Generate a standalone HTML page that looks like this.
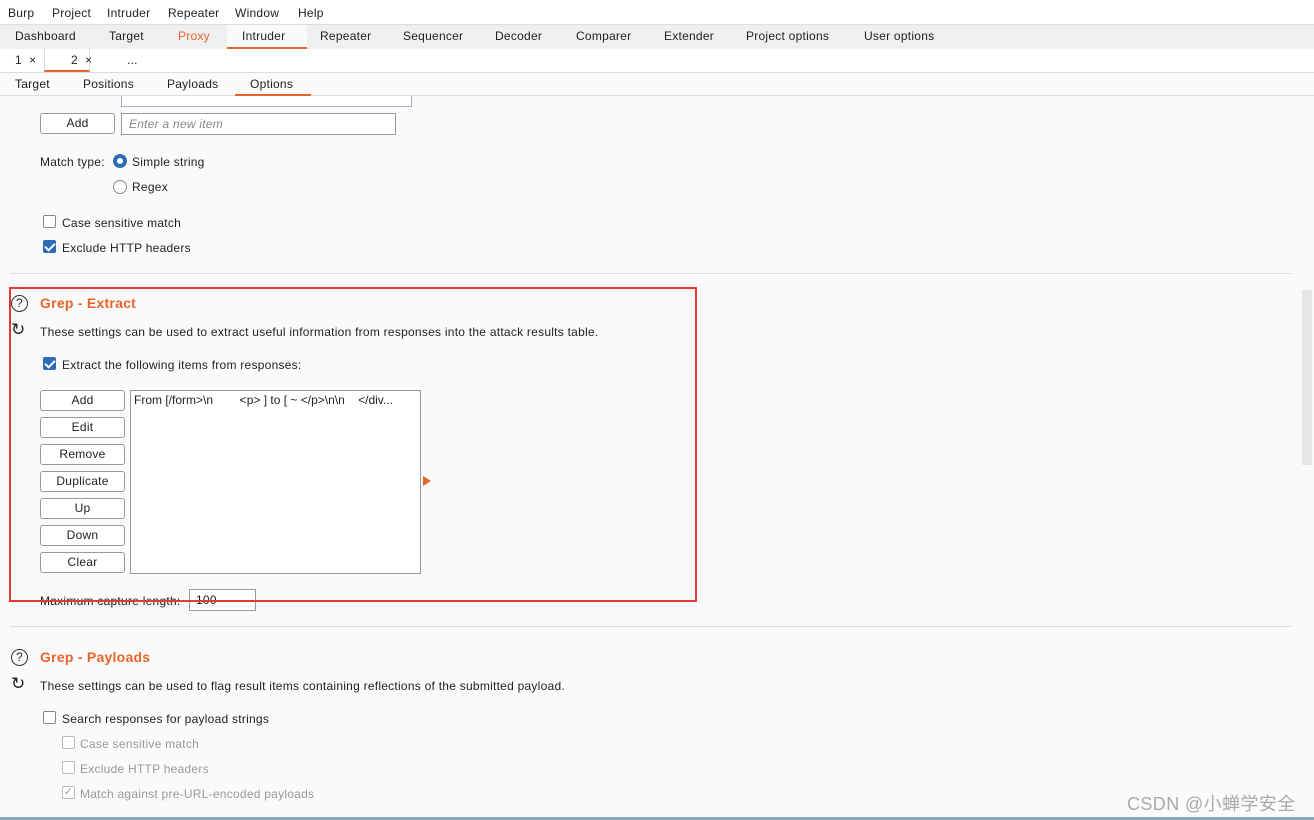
<!DOCTYPE html><html><head><style>
body{margin:0;width:1314px;height:820px;overflow:hidden;background:#fafafa;font-family:"Liberation Sans",sans-serif;font-size:12px;letter-spacing:0.25px;color:#222;position:relative}
.a{position:absolute;white-space:nowrap}
.btn{position:absolute;border:1px solid #999;border-radius:3px;background:#fff;text-align:center;font-size:12px;box-sizing:border-box;line-height:19px}
.cb{position:absolute;width:13px;height:13px;border:1px solid #888;border-radius:2px;background:#fff;box-sizing:border-box}
.cbk{background:#2a6cb5;border-color:#2a6cb5}
.cbk:after{content:"";position:absolute;left:3px;top:0px;width:4px;height:8px;border:solid #fff;border-width:0 2px 2px 0;transform:rotate(45deg)}
.dis{border-color:#bbb}
.h{color:#e8642b;font-weight:bold;font-size:14px}
.ic{position:absolute;width:17px;height:17px;border:1.5px solid #333;border-radius:50%;text-align:center;line-height:15px;font-size:12px;box-sizing:border-box}
</style></head><body>
<div class="a" style="left:0;top:0;width:1314px;height:24px;background:#fff"></div>
<div class="a" style="left:8px;top:6px">Burp</div><div class="a" style="left:52px;top:6px">Project</div><div class="a" style="left:107px;top:6px">Intruder</div><div class="a" style="left:168px;top:6px">Repeater</div><div class="a" style="left:235px;top:6px">Window</div><div class="a" style="left:298px;top:6px">Help</div>
<div class="a" style="left:0;top:24px;width:1314px;height:24px;background:#efefef;border-top:1px solid #ddd;border-bottom:1px solid #ddd"></div>
<div class="a" style="left:227px;top:25px;width:80px;height:22px;background:#fafafa;border-bottom:2px solid #e8642b"></div>
<div class="a" style="left:15px;top:29px">Dashboard</div><div class="a" style="left:109px;top:29px">Target</div><div class="a" style="left:178px;top:29px;color:#e8642b">Proxy</div><div class="a" style="left:242px;top:29px">Intruder</div><div class="a" style="left:320px;top:29px">Repeater</div><div class="a" style="left:403px;top:29px">Sequencer</div><div class="a" style="left:495px;top:29px">Decoder</div><div class="a" style="left:576px;top:29px">Comparer</div><div class="a" style="left:664px;top:29px">Extender</div><div class="a" style="left:746px;top:29px">Project options</div><div class="a" style="left:864px;top:29px">User options</div>
<div class="a" style="left:0;top:49px;width:1314px;height:23px;background:#fff;border-bottom:1px solid #ddd"></div>
<div class="a" style="left:44px;top:49px;width:44px;height:21px;border-bottom:2px solid #e8642b;border-left:1px solid #ddd;border-right:1px solid #ddd"></div>
<div class="a" style="left:15px;top:53px">1 &nbsp;×</div><div class="a" style="left:71px;top:53px">2 &nbsp;×</div><div class="a" style="left:127px;top:53px">...</div>
<div class="a" style="left:0;top:73px;width:1314px;height:22px;background:#fafafa;border-bottom:1px solid #ddd"></div>
<div class="a" style="left:235px;top:73px;width:76px;height:21px;border-bottom:2px solid #e8642b"></div>
<div class="a" style="left:15px;top:77px">Target</div><div class="a" style="left:83px;top:77px">Positions</div><div class="a" style="left:167px;top:77px">Payloads</div><div class="a" style="left:250px;top:77px">Options</div>
<div class="a" style="left:121px;top:96px;width:289px;height:10px;border:1px solid #aac;border-top:none;background:#fff"></div>
<div class="btn" style="left:40px;top:113px;width:75px;height:21px">Add</div>
<div class="a" style="left:121px;top:113px;width:273px;height:20px;border:1px solid #999;background:#fff"><span style="position:absolute;left:7px;top:3px;color:#888;font-style:italic">Enter a new item</span></div>
<div class="a" style="left:40px;top:155px">Match type:</div>
<div class="a" style="left:113px;top:154px;width:14px;height:14px;border-radius:50%;background:#2a6cb5;box-sizing:border-box"><div style="position:absolute;left:4px;top:4px;width:6px;height:6px;border-radius:50%;background:#fff"></div></div>
<div class="a" style="left:132px;top:155px">Simple string</div>
<div class="a" style="left:113px;top:180px;width:14px;height:14px;border-radius:50%;border:1px solid #888;background:#fff;box-sizing:border-box"></div>
<div class="a" style="left:132px;top:180px">Regex</div>
<div class="cb" style="left:43px;top:215px"></div><div class="a" style="left:62px;top:216px">Case sensitive match</div>
<div class="cb cbk" style="left:43px;top:240px"></div><div class="a" style="left:62px;top:241px">Exclude HTTP headers</div>
<div class="a" style="left:10px;top:273px;width:1282px;border-top:1px solid #ddd"></div>
<div class="ic" style="left:11px;top:295px">?</div>
<div class="a h" style="left:40px;top:295px">Grep - Extract</div>
<div class="a" style="left:11px;top:320px;font-size:17px">↻</div>
<div class="a" style="left:40px;top:325px">These settings can be used to extract useful information from responses into the attack results table.</div>
<div class="cb cbk" style="left:43px;top:357px"></div><div class="a" style="left:62px;top:358px">Extract the following items from responses:</div>
<div class="btn" style="left:40px;top:390px;width:85px;height:21px">Add</div>
<div class="btn" style="left:40px;top:417px;width:85px;height:21px">Edit</div>
<div class="btn" style="left:40px;top:444px;width:85px;height:21px">Remove</div>
<div class="btn" style="left:40px;top:471px;width:85px;height:21px">Duplicate</div>
<div class="btn" style="left:40px;top:498px;width:85px;height:21px">Up</div>
<div class="btn" style="left:40px;top:525px;width:85px;height:21px">Down</div>
<div class="btn" style="left:40px;top:552px;width:85px;height:21px">Clear</div>
<div class="a" style="left:130px;top:390px;width:289px;height:182px;border:1px solid #999;background:#fff"><span style="position:absolute;left:3px;top:2px;letter-spacing:0">From [/form&gt;\n &nbsp; &nbsp; &nbsp; &nbsp;&lt;p&gt; ] to [ ~ &lt;/p&gt;\n\n &nbsp; &nbsp;&lt;/div...</span></div>
<div class="a" style="left:423px;top:476px;width:0;height:0;border-left:8px solid #e8642b;border-top:5px solid transparent;border-bottom:5px solid transparent"></div>
<div class="a" style="left:40px;top:594px">Maximum capture length:</div>
<div class="a" style="left:189px;top:589px;width:65px;height:20px;border:1px solid #999;background:#fff"><span style="position:absolute;left:6px;top:3px">100</span></div>
<div class="a" style="left:9px;top:287px;width:684px;height:311px;border:2px solid #e53935"></div>
<div class="a" style="left:10px;top:626px;width:1282px;border-top:1px solid #ddd"></div>
<div class="ic" style="left:11px;top:649px">?</div>
<div class="a h" style="left:40px;top:649px">Grep - Payloads</div>
<div class="a" style="left:11px;top:674px;font-size:17px">↻</div>
<div class="a" style="left:40px;top:679px">These settings can be used to flag result items containing reflections of the submitted payload.</div>
<div class="cb" style="left:43px;top:711px"></div><div class="a" style="left:62px;top:712px">Search responses for payload strings</div>
<div class="cb dis" style="left:62px;top:736px"></div><div class="a" style="left:80px;top:737px;color:#999">Case sensitive match</div>
<div class="cb dis" style="left:62px;top:761px"></div><div class="a" style="left:80px;top:762px;color:#999">Exclude HTTP headers</div>
<div class="cb dis" style="left:62px;top:786px;color:#999;font-size:11px;line-height:11px;text-align:center">✓</div><div class="a" style="left:80px;top:787px;color:#999">Match against pre-URL-encoded payloads</div>
<div class="a" style="left:1302px;top:290px;width:10px;height:175px;background:#e6e6e6"></div>
<div class="a" style="left:1127px;top:790px;font-size:18px;letter-spacing:0.4px;color:#aaa;font-family:'Liberation Sans','Noto Sans CJK SC',sans-serif">CSDN @小蝉学安全</div>
<div class="a" style="left:0;top:817px;width:1314px;height:3px;background:#8ab"></div>
</body></html>
